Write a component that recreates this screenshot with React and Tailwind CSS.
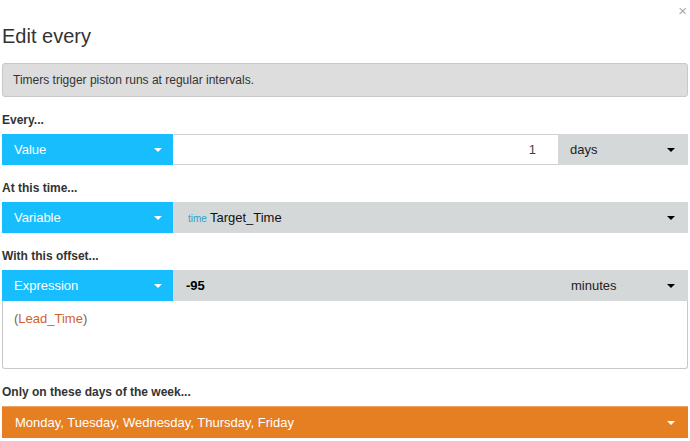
import React from "react";

function Caret({ className = "border-t-white" }) {
  return (
    <span
      className={`inline-block h-0 w-0 border-x-[4px] border-t-[4px] border-x-transparent ${className}`}
    ></span>
  );
}

function BlueSelect({ label }) {
  return (
    <div className="flex h-full w-[171px] shrink-0 items-center justify-between bg-[#17bdfd] pl-3 pr-[11px] text-[13px] text-white">
      <span>{label}</span>
      <Caret />
    </div>
  );
}

function Label({ children }) {
  return (
    <div className="mb-[5px] text-[12px] font-bold leading-[18px] text-[#333]">
      {children}
    </div>
  );
}

export default function App() {
  return (
    <div
      className="h-[441px] w-[690px] overflow-hidden bg-white px-[2px]"
      style={{ fontFamily: '"Liberation Sans", Arial, sans-serif' }}
    >
      {/* Header */}
      <div className="relative h-[63px]">
        <span className="absolute right-[1px] top-[3px] text-[15px] leading-none text-[#aaa]">
          ×
        </span>
        <h1 className="pt-[24px] text-[20px] leading-[24px] text-[#333]">Edit every</h1>
      </div>

      {/* Info */}
      <div className="flex h-[34px] items-center rounded-[3px] border border-[#c8c8c8] bg-[#dddddd] px-[10px] text-[12px] text-[#333]">
        Timers trigger piston runs at regular intervals.
      </div>

      {/* Every */}
      <div className="mt-[14px]">
        <Label>Every...</Label>
        <div className="flex h-[31px]">
          <BlueSelect label="Value" />
          <div className="ml-px flex h-full w-[384px] items-center justify-end border-y border-[#d0d0d0] bg-white pr-[22px] text-[13px] text-[#444]">
            1
          </div>
          <div className="flex h-full flex-1 items-center justify-between bg-[#d4d8d9] pl-3 pr-[13px] text-[13px] text-[#222]">
            <span>days</span>
            <Caret className="border-t-black" />
          </div>
        </div>
      </div>

      {/* At this time */}
      <div className="mt-[14px]">
        <Label>At this time...</Label>
        <div className="flex h-[31px]">
          <BlueSelect label="Variable" />
          <div className="flex h-full flex-1 items-center justify-between bg-[#d4d8d9] pl-[15px] pr-[13px] text-[13px] text-[#111]">
            <span>
              <span className="mr-[3px] text-[10px] text-[#2e9fd0]">time</span>
              Target_Time
            </span>
            <Caret className="border-t-black" />
          </div>
        </div>
      </div>

      {/* Offset */}
      <div className="mt-[14px]">
        <Label>With this offset...</Label>
        <div className="flex h-[31px]">
          <BlueSelect label="Expression" />
          <div className="flex h-full flex-1 items-center bg-[#d4d8d9] pr-[13px] text-[13px] text-[#222]">
            <span className="w-[385px] pl-[13px] font-bold text-black">-95</span>
            <span className="flex-1 pl-[13px]">minutes</span>
            <Caret className="border-t-black" />
          </div>
        </div>
        <div className="h-[68px] rounded-b-[3px] border border-t-0 border-[#c8c8c8] bg-white px-[11px] pt-[9px] text-[13px] leading-[18px]">
          <span className="text-[#666]">(</span>
          <span className="text-[#d2612b]">Lead_Time</span>
          <span className="text-[#666]">)</span>
        </div>
      </div>

      {/* Days */}
      <div className="mt-[14px]">
        <Label>Only on these days of the week...</Label>
        <div className="flex h-[32px] items-center justify-between border-t border-[#f0a060] bg-[#e67e22] pl-[13px] pr-[13px] text-[13px] text-white">
          <span>Monday, Tuesday, Wednesday, Thursday, Friday</span>
          <Caret />
        </div>
      </div>
    </div>
  );
}
